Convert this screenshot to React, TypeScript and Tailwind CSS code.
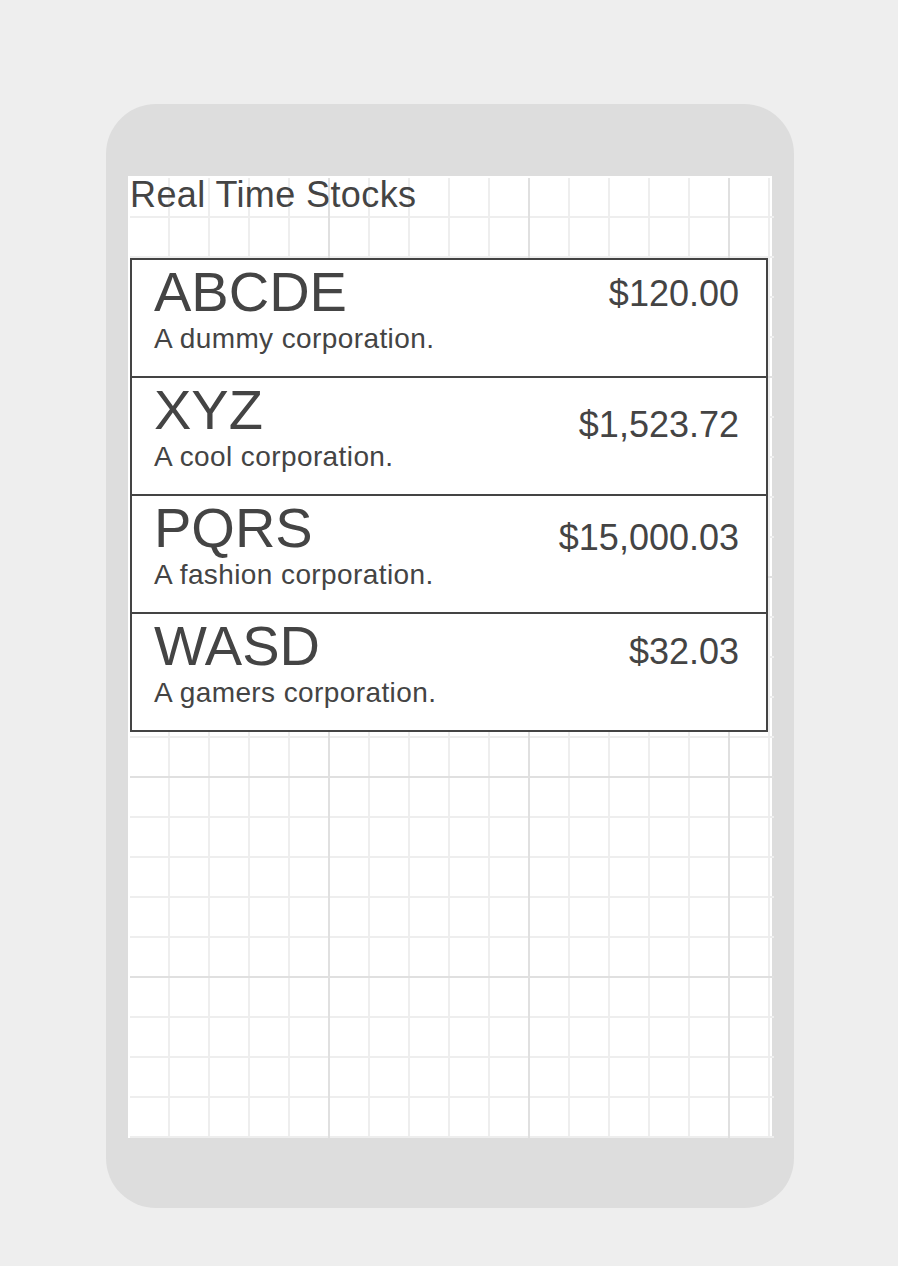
import React from "react";

type Stock = { ticker: string; desc: string; price: string; mt: string };

const stocks: Stock[] = [
  { ticker: "ABCDE", desc: "A dummy corporation.", price: "$120.00", mt: "mt-[16px]" },
  { ticker: "XYZ", desc: "A cool corporation.", price: "$1,523.72", mt: "mt-[29px]" },
  { ticker: "PQRS", desc: "A fashion corporation.", price: "$15,000.03", mt: "mt-[24px]" },
  { ticker: "WASD", desc: "A gamers corporation.", price: "$32.03", mt: "mt-[20px]" },
];

export default function App() {
  return (
    <div className="min-h-screen bg-[#eeeeee] pt-[104px] pb-[58px] font-['Liberation_Sans',Arial,sans-serif] text-[#444444]">
      <div className="ml-[106px] w-[688px] h-[1104px] rounded-[50px] bg-[#dddddd] pt-[72px] pl-[22px]">
        <div className="w-[644px] h-[962px] bg-white pt-[2px] pl-[2px]">
          <div className="w-[644px] h-[960px] bg-[linear-gradient(to_right,transparent_198px,#e0e0e0_198px),linear-gradient(to_bottom,transparent_198px,#e0e0e0_198px),linear-gradient(to_right,transparent_38px,#eeeeee_38px),linear-gradient(to_bottom,transparent_38px,#eeeeee_38px)] [background-size:200px_200px,200px_200px,40px_40px,40px_40px]">
            <h1 className="text-[36px] leading-[34px] tracking-[0.4px]">Real Time Stocks</h1>
            <div className="mt-[46px] w-[638px] border-2 border-[#444444] bg-white divide-y-2 divide-[#444444]">
              {stocks.map((s) => (
                <div key={s.ticker} className="box-content h-[116px] flex justify-between">
                  <div className="pl-[22px]">
                    <div className="text-[56px] leading-[63px]">{s.ticker}</div>
                    <div className="text-[28px] leading-[32px] tracking-[0.4px]">{s.desc}</div>
                  </div>
                  <div className={`pr-[27px] text-[36px] leading-[36px] ${s.mt}`}>{s.price}</div>
                </div>
              ))}
            </div>
          </div>
        </div>
      </div>
    </div>
  );
}
